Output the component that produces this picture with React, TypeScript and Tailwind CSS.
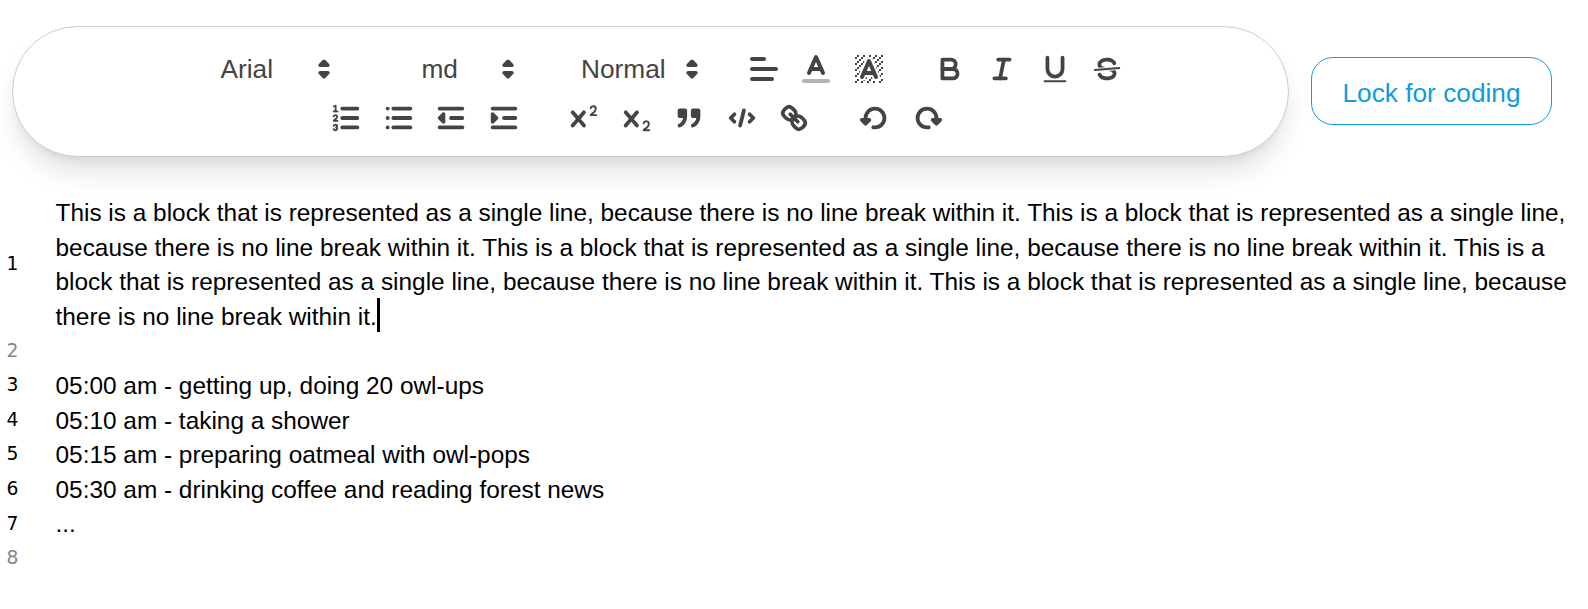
import React from "react";

type IconProps = { large?: boolean; children: React.ReactNode };

function Icon({ large, children }: IconProps) {
  return (
    <svg
      viewBox="0 0 18 18"
      className={
        "shrink-0 fill-none stroke-[#444] stroke-2 [stroke-linecap:round] [stroke-linejoin:round] " +
        (large ? "h-[36px] w-[36px]" : "h-[34px] w-[34px]")
      }
    >
      {children}
    </svg>
  );
}

type ToolProps = { label: string; large?: boolean; children: React.ReactNode };

function Tool({ label, large, children }: ToolProps) {
  return (
    <button aria-label={label} className="flex h-[49px] w-[52.5px] shrink-0 items-center justify-center">
      <Icon large={large}>{children}</Icon>
    </button>
  );
}

function Picker({ label, className }: { label: string; className: string }) {
  return (
    <div className={"flex h-[49px] items-center justify-between text-[26.25px] leading-[49px] text-[#444] " + className}>
      <span>{label}</span>
      <Icon>
        <polygon points="7 11 9 13 11 11 7 11" />
        <polygon points="7 7 9 5 11 7 7 7" />
      </Icon>
    </div>
  );
}

const DOTS: [number, number][] = [
  [4, 4], [2, 6], [3, 5], [4, 7], [2, 12], [2, 9], [2, 15], [3, 8], [12, 2], [11, 3],
  [2, 3], [6, 2], [3, 2], [5, 3], [9, 2], [15, 14], [13, 7], [15, 5], [14, 6], [15, 8],
  [14, 9], [14, 3], [15, 2], [12, 5], [13, 4], [9, 14], [8, 15], [5, 15], [11, 15],
  [14, 15], [15, 11],
];

const CROSS =
  "M9.651,5.241a1,1,0,0,0-1.41.108L6,7.964,3.759,5.349a1,1,0,0,0-1.519,1.3L4.683,9.5,2.241,12.35a1,1,0,1,0,1.519,1.3L6,11.036,8.241,13.65a1,1,0,0,0,1.519-1.3L7.317,9.5,9.759,6.651A1,1,0,0,0,9.651,5.241Z";

const fill = "fill-[#444] stroke-none";

function Toolbar() {
  return (
    <div className="h-[131px] w-[1277px] shrink-0 rounded-[66px] border border-[#ccc] bg-white pt-[17.5px] shadow-[0_18px_28px_-5px_rgba(0,0,0,0.13),0_7px_11px_-6px_rgba(0,0,0,0.08)]">
      <div className="flex">
        <Picker label="Arial" className="ml-[207.5px] w-[120.5px]" />
        <Picker label="md" className="ml-[80.5px] w-[103.5px]" />
        <Picker label="Normal" className="ml-[56px] w-[127.5px]" />
        <div className="ml-[29px] flex">
          <Tool label="Align" large>
            <line x1="3" x2="15" y1="9" y2="9" />
            <line x1="3" x2="13" y1="14" y2="14" />
            <line x1="3" x2="9" y1="4" y2="4" />
          </Tool>
          <Tool label="Text color" large>
            <line className="opacity-40" x1="3" x2="15" y1="15" y2="15" />
            <polyline points="5.5 11 9 3 12.5 11" />
            <line x1="11.63" x2="6.38" y1="9" y2="9" />
          </Tool>
          <Tool label="Background color" large>
            <g className={fill}>
              {DOTS.map(([x, y]) => (
                <rect key={x + "-" + y} x={x} y={y} width="1" height="1" />
              ))}
              <polygon points="6 6.868 6 6 5 6 5 7 5.942 7 6 6.868" />
              <polygon points="6.817 5 6 5 6 6 6.38 6 6.817 5" />
              <polygon points="4 11.439 4 11 3 11 3 12 3.755 12 4 11.439" />
              <polygon points="4.63 10 4 10 4 11 4.192 11 4.63 10" />
              <path d="M10.832,4.2L11,4.582V4H10.708A1.948,1.948,0,0,1,10.832,4.2Z" />
              <path d="M7,4.582L7.168,4.2A1.929,1.929,0,0,1,7.292,4H7V4.582Z" />
              <path d="M8,13H7.683l-0.351.8a1.933,1.933,0,0,1-.124.2H8V13Z" />
              <path d="M9,3H8V3.282A1.985,1.985,0,0,1,9,3Z" />
              <polygon points="13.447 10.174 13.469 10.225 13.472 10.232 13.808 11 14 11 14 10 13.37 10 13.447 10.174" />
              <path d="M3.775,14H3v1H4V14.314A1.97,1.97,0,0,1,3.775,14Z" />
              <polygon points="12 6.868 12 6 11.62 6 12 6.868" />
              <polygon points="12.933 9 13 9 13 8 12.495 8 12.933 9" />
              <path d="M6,14.926V15H7V14.316A1.993,1.993,0,0,1,6,14.926Z" />
              <path d="M10.668,13.8L10.317,13H10v1h0.792A1.947,1.947,0,0,1,10.668,13.8Z" />
              <path d="M14.332,12.2a1.99,1.99,0,0,1,.166.8H15V12H14.245Z" />
            </g>
            <polyline points="5.5 13 9 5 12.5 13" />
            <line x1="11.63" x2="6.38" y1="11" y2="11" />
          </Tool>
        </div>
        <div className="ml-[28.25px] flex">
          <Tool label="Bold">
            <path d="M5,4H9.5A2.5,2.5,0,0,1,12,6.5v0A2.5,2.5,0,0,1,9.5,9H5V4Z" />
            <path d="M5,9h5.5A2.5,2.5,0,0,1,13,11.5v0A2.5,2.5,0,0,1,10.5,14H5V9Z" />
          </Tool>
          <Tool label="Italic">
            <line x1="7" x2="13" y1="4" y2="4" />
            <line x1="5" x2="11" y1="14" y2="14" />
            <line x1="8" x2="10" y1="14" y2="4" />
          </Tool>
          <Tool label="Underline">
            <path d="M5,3V9a4.012,4.012,0,0,0,4,4H9a4.012,4.012,0,0,0,4-4V3" />
            <rect className={fill} height="1" rx="0.5" ry="0.5" width="12" x="3" y="15" />
          </Tool>
          <Tool label="Strike">
            <line className="stroke-1" x1="15.5" x2="2.5" y1="8.5" y2="9.5" />
            <path className={fill} d="M9.007,8C6.542,7.791,6,7.519,6,6.5,6,5.792,7.283,5,9,5c1.571,0,2.765.679,2.969,1.309a1,1,0,0,0,1.9-.617C13.356,4.106,11.354,3,9,3,6.2,3,4,4.538,4,6.5a3.2,3.2,0,0,0,.5,1.843Z" />
            <path className={fill} d="M8.984,10C11.457,10.208,12,10.479,12,11.5c0,0.708-1.283,1.5-3,1.5-1.571,0-2.765-.679-2.969-1.309a1,1,0,1,0-1.9.617C4.644,13.894,6.646,15,9,15c2.8,0,5-1.538,5-3.5a3.2,3.2,0,0,0-.5-1.843Z" />
          </Tool>
        </div>
      </div>
      <div className="flex pl-[307px]">
        <Tool label="Ordered list">
          <line x1="7" x2="15" y1="4" y2="4" />
          <line x1="7" x2="15" y1="9" y2="9" />
          <line x1="7" x2="15" y1="14" y2="14" />
          <line className="stroke-1" x1="2.5" x2="4.5" y1="5.5" y2="5.5" />
          <path className={fill} d="M3.5,6A0.5,0.5,0,0,1,3,5.5V3.085l-0.276.138A0.5,0.5,0,0,1,2.053,3c-0.124-.247-0.023-0.324.224-0.447l1-.5A0.5,0.5,0,0,1,4,2.5v3A0.5,0.5,0,0,1,3.5,6Z" />
          <path className="stroke-1" d="M4.5,10.5h-2c0-.234,1.85-1.076,1.85-2.234A0.959,0.959,0,0,0,2.5,8.156" />
          <path className="stroke-1" d="M2.5,14.846a0.959,0.959,0,0,0,1.85-.109A0.7,0.7,0,0,0,3.75,14a0.688,0.688,0,0,0,.6-0.736,0.959,0.959,0,0,0-1.85-.109" />
        </Tool>
        <Tool label="Bullet list">
          <line x1="6" x2="15" y1="4" y2="4" />
          <line x1="6" x2="15" y1="9" y2="9" />
          <line x1="6" x2="15" y1="14" y2="14" />
          <line x1="3" x2="3" y1="4" y2="4" />
          <line x1="3" x2="3" y1="9" y2="9" />
          <line x1="3" x2="3" y1="14" y2="14" />
        </Tool>
        <Tool label="Outdent">
          <line x1="3" x2="15" y1="14" y2="14" />
          <line x1="3" x2="15" y1="4" y2="4" />
          <line x1="9" x2="15" y1="9" y2="9" />
          <polyline points="5 7 5 11 3 9 5 7" />
        </Tool>
        <Tool label="Indent">
          <line x1="3" x2="15" y1="14" y2="14" />
          <line x1="3" x2="15" y1="4" y2="4" />
          <line x1="9" x2="15" y1="9" y2="9" />
          <polyline className="fill-[#444]" points="3 7 3 11 5 9 3 7" />
        </Tool>
        <div className="ml-[28px] flex">
          <Tool label="Superscript">
            <path className={fill} d="M15.5,7H13.861a4.015,4.015,0,0,0,1.914-2.975,1.8,1.8,0,0,0-1.6-1.751A1.922,1.922,0,0,0,12.021,3.7a0.5,0.5,0,1,0,.957.291,0.917,0.917,0,0,1,1.053-.725,0.81,0.81,0,0,1,.744.762c0,1.077-1.164,1.925-1.934,2.486A1.423,1.423,0,0,0,12,7.5a0.5,0.5,0,0,0,.5.5h3A0.5,0.5,0,0,0,15.5,7Z" />
            <path className={fill} d={CROSS} />
          </Tool>
          <Tool label="Subscript">
            <path className={fill} d="M15.5,15H13.861a3.858,3.858,0,0,0,1.914-2.975,1.8,1.8,0,0,0-1.6-1.751A1.921,1.921,0,0,0,12.021,11.7a0.5,0.5,0,1,0,.957.291h0a0.914,0.914,0,0,1,1.053-.725,0.81,0.81,0,0,1,.744.762c0,1.076-1.17,1.87-1.94,2.431A1.456,1.456,0,0,0,12,15.5a0.5,0.5,0,0,0,.5.5h3A0.5,0.5,0,0,0,15.5,15Z" />
            <path className={fill} d={CROSS} />
          </Tool>
          <Tool label="Quote">
            <rect className="fill-[#444]" height="3" width="3" x="4" y="5" />
            <rect className="fill-[#444]" height="3" width="3" x="11" y="5" />
            <path className="fill-[#444]" d="M7,8c0,4.031-3,5-3,5" />
            <path className="fill-[#444]" d="M14,8c0,4.031-3,5-3,5" />
          </Tool>
          <Tool label="Code">
            <polyline points="5 7 3 9 5 11" />
            <polyline points="13 7 15 9 13 11" />
            <line x1="10" x2="8" y1="5" y2="13" />
          </Tool>
          <Tool label="Link">
            <line x1="7" x2="11" y1="7" y2="11" />
            <path d="M8.9,4.577a3.476,3.476,0,0,1,.36,4.679A3.476,3.476,0,0,1,4.577,8.9C3.185,7.5,2.035,6.4,4.217,4.217S7.5,3.185,8.9,4.577Z" />
            <path d="M13.423,9.1a3.476,3.476,0,0,0-4.679-.36,3.476,3.476,0,0,0,.36,4.679c1.392,1.392,2.5,2.542,4.679.36S14.815,10.5,13.423,9.1Z" />
          </Tool>
        </div>
        <div className="ml-[28px] flex">
          <Tool label="Undo">
            <polygon className="fill-[#444]" points="6 10 4 12 2 10 6 10" />
            <path d="M8.09,13.91A4.6,4.6,0,0,0,9,14,5,5,0,1,0,4,9" />
          </Tool>
          <Tool label="Redo">
            <polygon className="fill-[#444]" points="12 10 14 12 16 10 12 10" />
            <path d="M9.91,13.91A4.6,4.6,0,0,1,9,14a5,5,0,1,1,5-5" />
          </Tool>
        </div>
      </div>
    </div>
  );
}

const SENTENCE = "This is a block that is represented as a single line, because there is no line break within it.";

const LINES: string[] = [
  Array(5).fill(SENTENCE).join(" "),
  "",
  "05:00 am - getting up, doing 20 owl-ups",
  "05:10 am - taking a shower",
  "05:15 am - preparing oatmeal with owl-pops",
  "05:30 am - drinking coffee and reading forest news",
  "...",
  "",
];

export default function App() {
  return (
    <div className="h-[609px] w-[1588px] overflow-hidden bg-white pt-[26px] font-['Liberation_Sans',Arial,sans-serif]">
      <div className="flex pl-[12px]">
        <Toolbar />
        <button className="mt-[31px] ml-[22px] h-[68px] w-[241px] shrink-0 rounded-[22px] border border-[#0e9ce0] pt-[5px] text-[26.25px] leading-none whitespace-nowrap text-[#0e9ce0]">
          Lock for coding
        </button>
      </div>
      <div className="mt-[39px] text-[24.4px] leading-[34.6px] text-black">
        {LINES.map((text, i) => (
          <div key={i} className="flex min-h-[34.6px] items-center">
            <div
              className={
                "w-[55.5px] shrink-0 pb-[2px] pl-[6.6px] font-['DejaVu_Sans',sans-serif] text-[18.75px] leading-[30px] " +
                (text ? "text-black" : "text-[#888]")
              }
            >
              {i + 1}
            </div>
            <div className="w-[1516px] shrink-0">
              {text}
              {i === 0 && (
                <span className="relative -top-[2px] -mr-[3px] inline-block h-[34.5px] w-[3px] bg-black align-bottom" />
              )}
            </div>
          </div>
        ))}
      </div>
    </div>
  );
}
